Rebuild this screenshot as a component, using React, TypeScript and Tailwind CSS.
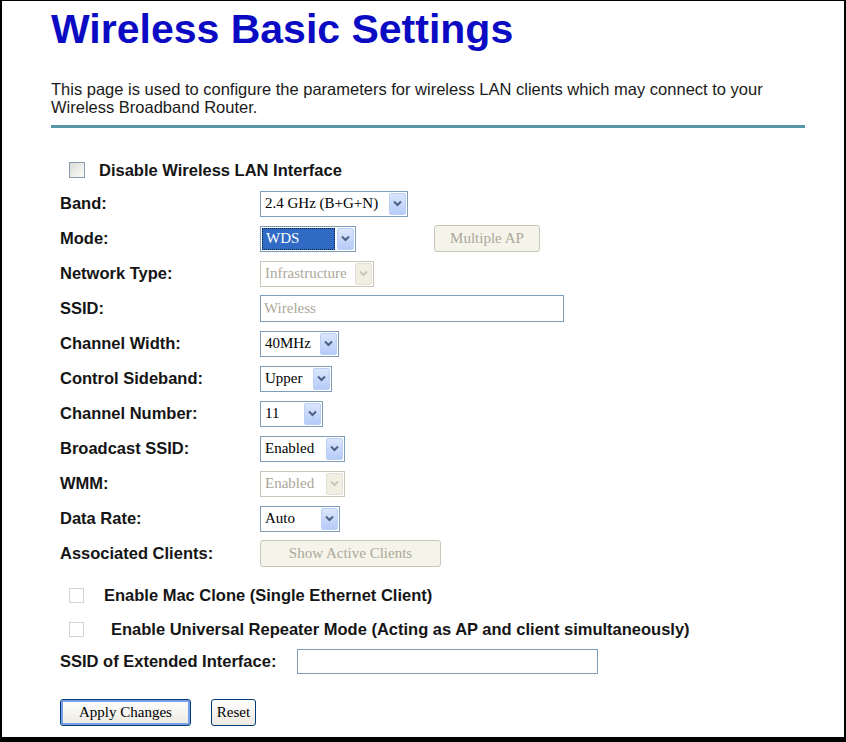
import React from "react";

const serif = "font-['Liberation_Serif',serif]";

function Arrow({ disabled }: { disabled?: boolean }) {
  return (
    <div
      className={
        "flex w-[17px] shrink-0 items-center justify-center self-stretch m-px rounded-[2px] border " +
        (disabled
          ? "border-[#e3e1d6] bg-[#f1efe2]"
          : "border-[#bcd0f5] bg-gradient-to-b from-[#dbe6fd] to-[#b5cbf8]")
      }
    >
      <svg width="9" height="7" viewBox="0 0 9 7">
        <path
          d="M1 1.5 L4.5 5 L8 1.5"
          fill="none"
          stroke={disabled ? "#c9c7ba" : "#4d6185"}
          strokeWidth="2"
        />
      </svg>
    </div>
  );
}

function Select({
  w,
  value,
  disabled,
  highlight,
}: {
  w: string;
  value: string;
  disabled?: boolean;
  highlight?: boolean;
}) {
  return (
    <div
      className={
        "flex h-[26px] items-stretch border bg-white " +
        w +
        " " +
        (disabled ? "border-[#c9c7ba]" : "border-[#7f9db9]")
      }
    >
      <div className="flex flex-1 items-center p-px">
        {highlight ? (
          <div
            className={
              "flex h-full w-full items-center border border-dotted border-[#0a1e44] bg-[#316ac5] pl-[3px] text-[15px] text-white " +
              serif
            }
          >
            {value}
          </div>
        ) : (
          <span
            className={
              "pl-[3px] text-[15px] " +
              serif +
              (disabled ? " text-[#aca899]" : " text-black")
            }
          >
            {value}
          </span>
        )}
      </div>
      <Arrow disabled={disabled} />
    </div>
  );
}

function Btn({
  w,
  label,
  disabled,
  focus,
}: {
  w: string;
  label: string;
  disabled?: boolean;
  focus?: boolean;
}) {
  return (
    <div
      className={
        "flex h-[27px] items-center justify-center rounded-[3px] border text-[15px] " +
        serif +
        " " +
        w +
        " " +
        (disabled
          ? "border-[#c9c7ba] bg-[#f5f4ea] text-[#aca899]"
          : focus
          ? "border-[#003c74] bg-gradient-to-b from-[#ffffff] to-[#ece9e0] text-black shadow-[inset_0_0_0_2px_#7b9ee8]"
          : "border-[#003c74] bg-gradient-to-b from-[#ffffff] to-[#ece9e0] text-black")
      }
    >
      {label}
    </div>
  );
}

function Check({ light }: { light?: boolean }) {
  return (
    <div
      className={
        "shrink-0 border " +
        (light
          ? "h-[15px] w-[15px] border-[#d4d3cc] bg-white"
          : "h-[16px] w-[16px] border-[#8a9bb0] bg-gradient-to-br from-[#dcdcd6] to-[#fbfbf9]")
      }
    />
  );
}

function Row({
  label,
  children,
}: {
  label: string;
  children: React.ReactNode;
}) {
  return (
    <div className="flex h-[35px] items-center">
      <div className="w-[200px] text-[16.5px] font-bold text-[#151515]">
        {label}
      </div>
      {children}
    </div>
  );
}

export default function App() {
  return (
    <div className="h-[742px] w-[846px] overflow-hidden border-b-[5px] border-l-2 border-r-2 border-t border-black bg-white font-['Liberation_Sans',Arial,sans-serif]">
      <div className="pl-[49px] pt-[8px]">
        <h1 className="text-[41px] font-bold leading-none text-[#0b0bc4]">
          Wireless Basic Settings
        </h1>
        <p className="mt-[30px] text-[16.5px] leading-[18px] text-[#1a1a1a]">
          This page is used to configure the parameters for wireless LAN
          clients which may connect to your
          <br />
          Wireless Broadband Router.
        </p>
        <div className="mt-[9px] h-[3px] w-[754px] bg-[#5796a6]" />

        <div className="pl-[9px]">
          <div className="mt-[26px] flex h-[32px] items-center">
            <div className="w-[9px]" />
            <Check />
            <span className="ml-[14px] text-[16.5px] font-bold text-[#151515]">
              Disable Wireless LAN Interface
            </span>
          </div>

          <Row label="Band:">
            <Select w="w-[148px]" value="2.4 GHz (B+G+N)" />
          </Row>
          <Row label="Mode:">
            <Select w="w-[96px]" value="WDS" highlight />
            <div className="w-[78px]" />
            <Btn w="w-[106px]" label="Multiple AP" disabled />
          </Row>
          <Row label="Network Type:">
            <Select w="w-[114px]" value="Infrastructure" disabled />
          </Row>
          <Row label="SSID:">
            <div
              className={
                "flex h-[27px] w-[304px] items-center border border-[#7f9db9] bg-white pl-[3px] text-[15px] text-[#aca899] " +
                serif
              }
            >
              Wireless
            </div>
          </Row>
          <Row label="Channel Width:">
            <Select w="w-[79px]" value="40MHz" />
          </Row>
          <Row label="Control Sideband:">
            <Select w="w-[72px]" value="Upper" />
          </Row>
          <Row label="Channel Number:">
            <Select w="w-[63px]" value="11" />
          </Row>
          <Row label="Broadcast SSID:">
            <Select w="w-[85px]" value="Enabled" />
          </Row>
          <Row label="WMM:">
            <Select w="w-[85px]" value="Enabled" disabled />
          </Row>
          <Row label="Data Rate:">
            <Select w="w-[80px]" value="Auto" />
          </Row>
          <Row label="Associated Clients:">
            <Btn w="w-[181px]" label="Show Active Clients" disabled />
          </Row>

          <div className="mt-[7px] flex h-[35px] items-center">
            <div className="w-[9px]" />
            <Check light />
            <span className="ml-[20px] text-[16.5px] font-bold text-[#151515]">
              Enable Mac Clone (Single Ethernet Client)
            </span>
          </div>
          <div className="flex h-[32px] items-center">
            <div className="w-[9px]" />
            <Check light />
            <span className="ml-[27px] text-[16.5px] font-bold text-[#151515]">
              Enable Universal Repeater Mode (Acting as AP and client
              simultaneously)
            </span>
          </div>
          <div className="flex h-[32px] items-center">
            <span className="w-[237px] text-[16.5px] font-bold text-[#151515]">
              SSID of Extended Interface:
            </span>
            <div className="h-[25px] w-[301px] border border-[#7f9db9] bg-white" />
          </div>

          <div className="mt-[22px] flex items-center">
            <Btn w="w-[131px]" label="Apply Changes" focus />
            <div className="w-[20px]" />
            <Btn w="w-[45px]" label="Reset" />
          </div>
        </div>
      </div>
    </div>
  );
}
